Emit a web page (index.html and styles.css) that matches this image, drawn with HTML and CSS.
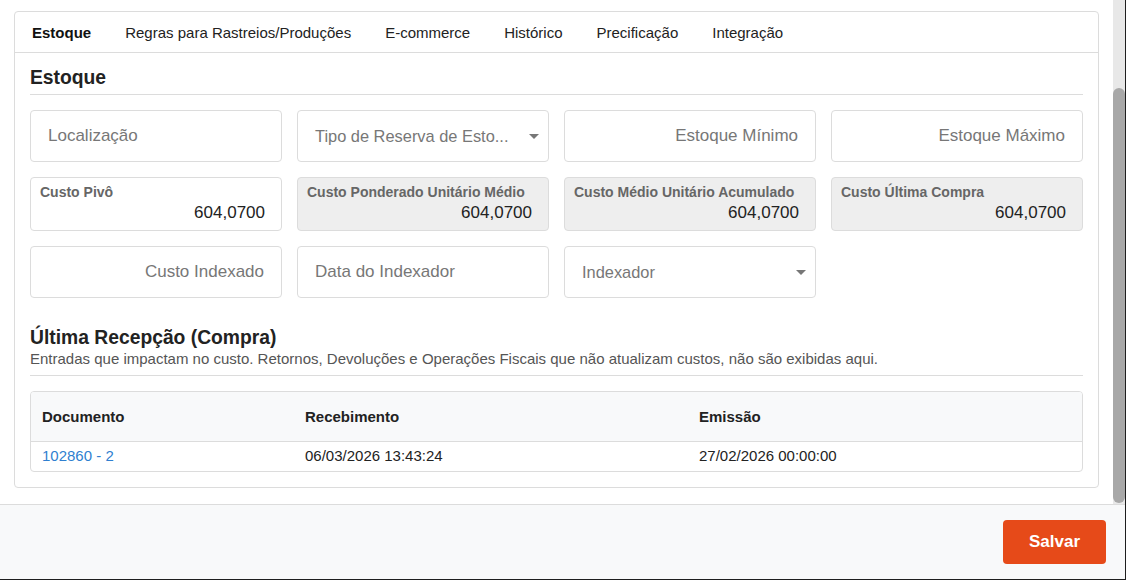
FILE: index.html
```html
<!DOCTYPE html>
<html lang="pt-BR">
<head>
  <meta charset="UTF-8">
  <title>Produto - Estoque</title>
  <link rel="stylesheet" href="styles.css">
</head>
<body>
  <div class="window">
    <div class="main">
      <div class="content">
        <div class="card">
          <ul class="tabs">
            <li class="tab active">Estoque</li>
            <li class="tab">Regras para Rastreios/Produções</li>
            <li class="tab">E-commerce</li>
            <li class="tab">Histórico</li>
            <li class="tab">Precificação</li>
            <li class="tab">Integração</li>
          </ul>

          <div class="card-body">
            <h2 class="section-title">Estoque</h2>

            <div class="fields">
              <div class="field"><span class="placeholder">Localização</span></div>
              <div class="field select"><span class="placeholder">Tipo de Reserva de Esto...</span><span class="caret"></span></div>
              <div class="field right"><span class="placeholder">Estoque Mínimo</span></div>
              <div class="field right"><span class="placeholder">Estoque Máximo</span></div>

              <div class="field floating">
                <label>Custo Pivô</label>
                <div class="value">604,0700</div>
              </div>
              <div class="field floating disabled">
                <label>Custo Ponderado Unitário Médio</label>
                <div class="value">604,0700</div>
              </div>
              <div class="field floating disabled">
                <label>Custo Médio Unitário Acumulado</label>
                <div class="value">604,0700</div>
              </div>
              <div class="field floating disabled">
                <label>Custo Última Compra</label>
                <div class="value">604,0700</div>
              </div>

              <div class="field right"><span class="placeholder">Custo Indexado</span></div>
              <div class="field"><span class="placeholder">Data do Indexador</span></div>
              <div class="field select"><span class="placeholder">Indexador</span><span class="caret"></span></div>
            </div>

            <h2 class="section-title sub">Última Recepção (Compra)</h2>
            <p class="section-desc">Entradas que impactam no custo. Retornos, Devoluções e Operações Fiscais que não atualizam custos, não são exibidas aqui.</p>

            <div class="table-wrap">
              <table class="grid">
                <thead>
                  <tr>
                    <th class="col-doc">Documento</th>
                    <th class="col-rec">Recebimento</th>
                    <th>Emissão</th>
                  </tr>
                </thead>
                <tbody>
                  <tr>
                    <td><a href="#">102860 - 2</a></td>
                    <td>06/03/2026 13:43:24</td>
                    <td>27/02/2026 00:00:00</td>
                  </tr>
                </tbody>
              </table>
            </div>
          </div>
        </div>
      </div>
      <div class="scrollbar"><div class="thumb"></div></div>
    </div>

    <div class="footer">
      <button class="btn-save">Salvar</button>
    </div>
  </div>
</body>
</html>
```

FILE: styles.css
```css
* {
  box-sizing: border-box;
}
html, body {
  margin: 0;
  padding: 0;
}
body {
  font-family: "Liberation Sans", Arial, sans-serif;
  color: #212529;
  background-color: #fff;
}
.window {
  width: 1126px;
  height: 580px;
  display: flex;
  flex-direction: column;
  border-right: 1px solid #1e1e1e;
  border-bottom: 1px solid #1e1e1e;
}
.main {
  height: 504px;
  display: flex;
  overflow: hidden;
}
.content {
  flex: 1;
  padding: 11px 14px;
}
.scrollbar {
  width: 12px;
  background-color: #e8e8e8;
  display: flex;
  justify-content: center;
}
.thumb {
  width: 12px;
  height: 415px;
  margin-top: 88px;
  background-color: #a8a8a8;
  border-radius: 6px;
}

/* card + tabs */
.card {
  border: 1px solid #dcdcdc;
  border-radius: 4px;
  background-color: #fff;
}
.tabs {
  list-style: none;
  margin: 0;
  padding: 0;
  display: flex;
  height: 41px;
  border-bottom: 1px solid #dcdcdc;
}
.tab {
  padding: 2px 17px 0;
  font-size: 15px;
  line-height: 38px;
  color: #222;
}
.tab.active {
  font-weight: bold;
  color: #111;
}
.card-body {
  padding: 13px 15px 15px;
}
.section-title {
  margin: 0;
  font-size: 19.3px;
  line-height: 24px;
  font-weight: bold;
  color: #222;
  padding-bottom: 4px;
  border-bottom: 1px solid #dcdcdc;
}
.section-title.sub {
  margin-top: 28px;
  padding-bottom: 0;
  border-bottom: none;
}
.section-desc {
  margin: 0;
  font-size: 15px;
  line-height: 18px;
  color: #555;
  padding-bottom: 7px;
  border-bottom: 1px solid #dcdcdc;
}

/* form fields */
.fields {
  margin-top: 15px;
  display: grid;
  grid-template-columns: repeat(4, 252px);
  column-gap: 15px;
  row-gap: 15px;
}
.field {
  height: 52px;
  border: 1px solid #dcdcdc;
  border-radius: 4px;
  padding: 0 17px;
  display: flex;
  align-items: center;
  font-size: 17px;
}
.field.right {
  justify-content: flex-end;
}
.placeholder {
  color: #777;
  white-space: nowrap;
}
.field.select {
  justify-content: space-between;
  font-size: 16.4px;
}
.caret {
  width: 0;
  height: 0;
  border-left: 5px solid transparent;
  border-right: 5px solid transparent;
  border-top: 5px solid #777;
  margin-right: -8px;
}
.field.floating {
  height: 54px;
  flex-direction: column;
  align-items: stretch;
  justify-content: flex-start;
  padding: 7px 16px 7px 9px;
}
.field.floating label {
  font-size: 14px;
  line-height: 15px;
  font-weight: bold;
  color: #666;
  white-space: nowrap;
}
.field.floating .value {
  margin-top: 3px;
  font-size: 17px;
  line-height: 20px;
  text-align: right;
  color: #222;
}
.field.disabled {
  background-color: #eeeeee;
}

/* table */
.table-wrap {
  margin-top: 15px;
  border: 1px solid #dcdcdc;
  border-radius: 4px;
  overflow: hidden;
}
.grid {
  width: 100%;
  border-collapse: collapse;
  font-size: 15px;
}
.grid th {
  text-align: left;
  font-weight: bold;
  background-color: #f8f9fa;
  height: 49px;
  padding: 0 11px;
  border-bottom: 1px solid #dcdcdc;
  color: #222;
}
.grid td {
  height: 30px;
  padding: 0 11px 2px;
  color: #222;
}
.col-doc {
  width: 263px;
}
.col-rec {
  width: 394px;
}
.grid a {
  color: #2f7fd0;
  text-decoration: none;
}

/* footer */
.footer {
  flex: 1;
  background-color: #f8f9fa;
  border-top: 1px solid #dcdcdc;
  display: flex;
  justify-content: flex-end;
  align-items: flex-start;
  padding: 15px 19px 0 0;
}
.btn-save {
  width: 103px;
  height: 44px;
  background-color: #e64a19;
  color: #fff;
  border: none;
  border-radius: 4px;
  font-family: "Liberation Sans", Arial, sans-serif;
  font-size: 17px;
  font-weight: bold;
  cursor: pointer;
}
.btn-save:hover {
  background-color: #d84315;
}
```
